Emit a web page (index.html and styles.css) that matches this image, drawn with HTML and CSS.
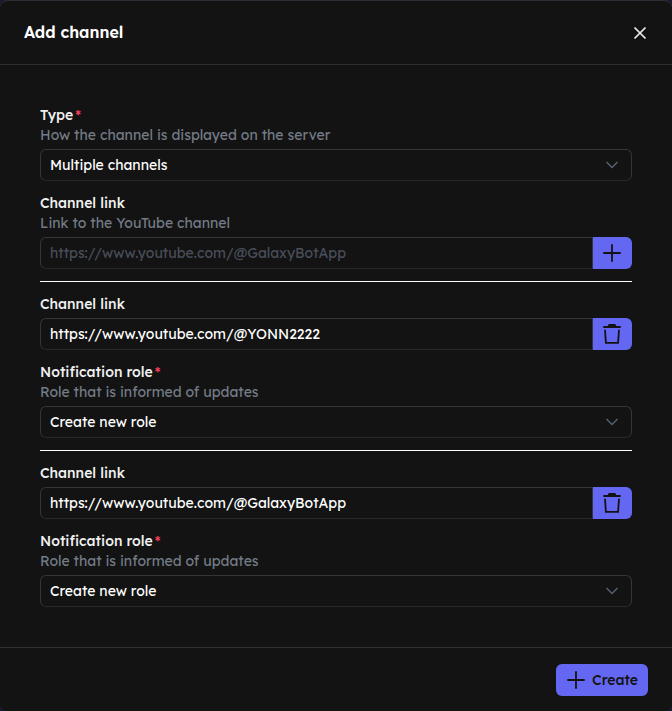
FILE: index.html
```html
<!DOCTYPE html>
<html lang="en">
<head>
<meta charset="utf-8">
<meta name="viewport" content="width=device-width, initial-scale=1">
<title>Add channel</title>
<link rel="stylesheet" href="styles.css">
</head>
<body>
<svg class="sprite" aria-hidden="true">
  <symbol id="chevron" viewBox="0 0 20 20"><path d="M4.500 7 10 12.500 15.500 7" fill="none" stroke="currentColor" stroke-width="1.500"/></symbol>
  <symbol id="plus" viewBox="0 0 20 20"><path d="M10 1.300v17.400M1.300 10h17.400" fill="none" stroke="currentColor" stroke-width="1.800"/></symbol>
  <symbol id="trash" viewBox="0 0 20 20"><path d="M6 2V1l1-1h6l1 1v1h4.700v2H1.300V2z" fill="currentColor"/><path d="m3 5.800.9 13h12.200l.9-13" fill="none" stroke="currentColor" stroke-width="1.800"/></symbol>
</svg>
<form class="modal" role="dialog" aria-labelledby="title">
  <header class="modal-header">
    <h1 class="title" id="title">Add channel</h1>
    <button class="close" type="button" aria-label="Close">
      <svg class="close-icon" viewBox="0 0 16 16"><path d="m2.500 2.500 11 11m0-11-11 11" fill="none" stroke="currentColor" stroke-width="1.700"/></svg>
    </button>
  </header>
  <main class="modal-body">
    <div class="field">
      <label class="label" for="type">Type<span class="required">*</span></label>
      <p class="hint">How the channel is displayed on the server</p>
      <div class="select-box">
        <select class="control" id="type"><option>Multiple channels</option></select>
        <svg class="chevron"><use href="#chevron"/></svg>
      </div>
    </div>
    <div class="field">
      <label class="label" for="new-link">Channel link</label>
      <p class="hint">Link to the YouTube channel</p>
      <div class="input-group">
        <input class="control" id="new-link" type="text" placeholder="https://www.youtube.com/@GalaxyBotApp">
        <button class="addon" type="button" aria-label="Add"><svg class="icon"><use href="#plus"/></svg></button>
      </div>
    </div>
    <hr class="divider">
    <div class="field">
      <label class="label" for="link-1">Channel link</label>
      <div class="input-group">
        <input class="control" id="link-1" type="text" value="https://www.youtube.com/@YONN2222">
        <button class="addon" type="button" aria-label="Delete"><svg class="icon"><use href="#trash"/></svg></button>
      </div>
    </div>
    <div class="field">
      <label class="label" for="role-1">Notification role<span class="required">*</span></label>
      <p class="hint">Role that is informed of updates</p>
      <div class="select-box">
        <select class="control" id="role-1"><option>Create new role</option></select>
        <svg class="chevron"><use href="#chevron"/></svg>
      </div>
    </div>
    <hr class="divider">
    <div class="field">
      <label class="label" for="link-2">Channel link</label>
      <div class="input-group">
        <input class="control" id="link-2" type="text" value="https://www.youtube.com/@GalaxyBotApp">
        <button class="addon" type="button" aria-label="Delete"><svg class="icon"><use href="#trash"/></svg></button>
      </div>
    </div>
    <div class="field">
      <label class="label" for="role-2">Notification role<span class="required">*</span></label>
      <p class="hint">Role that is informed of updates</p>
      <div class="select-box">
        <select class="control" id="role-2"><option>Create new role</option></select>
        <svg class="chevron"><use href="#chevron"/></svg>
      </div>
    </div>
  </main>
  <footer class="modal-footer">
    <button class="create" type="submit"><svg class="icon"><use href="#plus"/></svg>Create</button>
  </footer>
</form>
</body>
</html>
```
FILE: styles.css
```css
* { box-sizing: border-box; }

body {
  margin: 0;
  background: #1a1a2e;
  color: #fff;
  font: 14px/20px Lexend, Inter, sans-serif;
}

button, input, select { font: inherit; }
button { cursor: pointer; }
h1, p { margin: 0; }
.sprite { display: none; }

.modal {
  display: flex;
  flex-direction: column;
  min-height: 100vh;
  border-top: 1px solid #2c2e36;
  border-radius: 8px;
  background: #131313;
}

.modal-header {
  display: flex;
  align-items: flex-start;
  justify-content: space-between;
  padding: 19px 24px 18px;
  border-bottom: 1px solid #2c2e33;
}

.title { font-size: 16px; line-height: 24px; font-weight: 600; }

.close {
  display: flex;
  padding: 5px 0;
  border: 0;
  background: none;
  color: #eee;
}

.close-icon { width: 16px; height: 16px; }

.modal-body {
  display: flex;
  flex: 1;
  flex-direction: column;
  gap: 12px;
  padding: 40px;
}

.label { display: block; font-weight: 500; color: #f0f0f0; }
.required { margin-left: 2px; color: #f43f5e; }
.hint { color: #747b87; }

.select-box, .input-group {
  position: relative;
  display: flex;
  margin-top: 4px;
}

.control {
  flex: 1;
  min-width: 0;
  height: 32px;
  padding: 0 9px;
  border: 1px solid #36363a;
  border-bottom-color: #29292b;
  border-radius: 6px;
  outline: 0;
  background: #131313;
  color: #fff;
  appearance: none;
}

.control::placeholder { color: #484e59; opacity: 1; }
.input-group .control { border-radius: 6px 0 0 6px; }

.chevron {
  position: absolute;
  top: 6px;
  right: 10px;
  width: 20px;
  height: 20px;
  color: #566070;
  pointer-events: none;
}

.addon {
  display: grid;
  place-items: center;
  width: 39px;
  padding: 0 1px 0 0;
  border: 0;
  border-radius: 0 6px 6px 0;
  background: #6467f2;
  color: #131313;
}

.icon { width: 20px; height: 20px; }

.divider {
  width: 100%;
  height: 1px;
  margin: 0;
  border: 0;
  background: #fff;
}

.modal-footer {
  display: flex;
  justify-content: flex-end;
  padding: 16px 24px 15px;
  border-top: 1px solid #303030;
}

.create {
  display: flex;
  align-items: center;
  gap: 6px;
  height: 32px;
  padding: 0 10px;
  border: 0;
  border-radius: 6px;
  background: #6467f2;
  color: #131313;
  font-weight: 500;
}
```
